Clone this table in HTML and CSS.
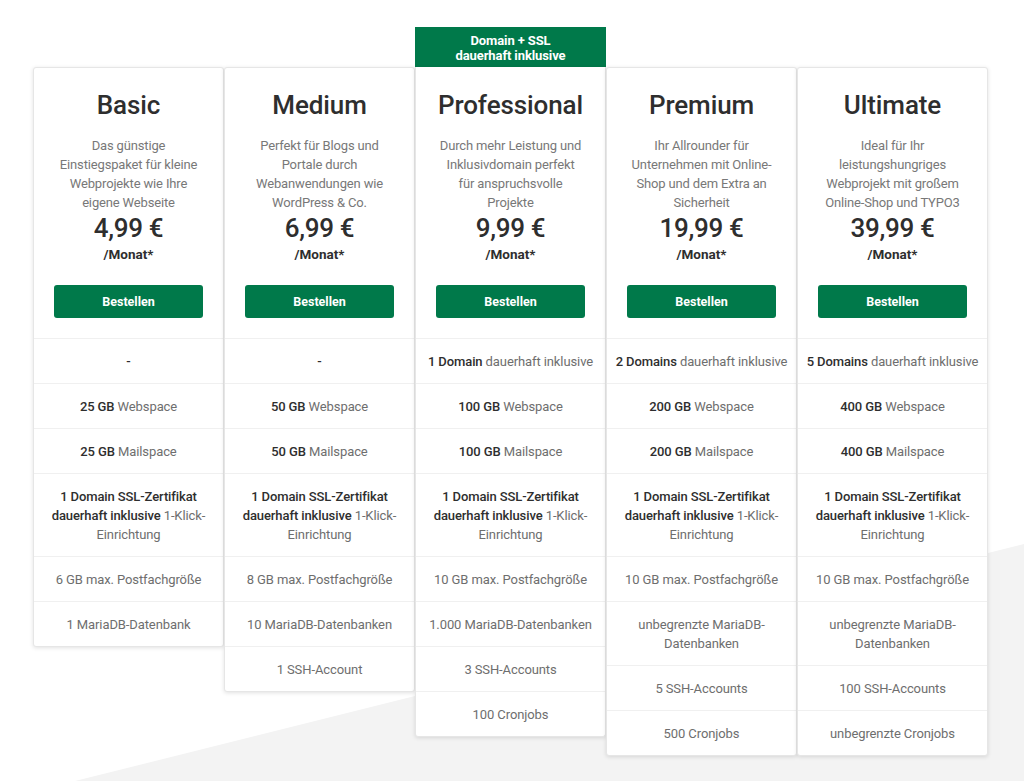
FILE: index.html
```html
<!DOCTYPE html>
<html lang="de">
<head>
<meta charset="utf-8">
<title>Hosting Tarife</title>
<link rel="stylesheet" href="styles.css">
</head>
<body>
<div class="page">
  <div class="bg-shape"></div>
  <div class="plans">
    <div class="plan">
      <div class="card">
        <div class="head">
          <h2 class="title">Basic</h2>
          <p class="desc">Das günstige<br>Einstiegspaket für kleine<br>Webprojekte wie Ihre<br>eigene Webseite</p>
          <div class="price">4,99 €</div>
          <div class="period">/Monat*</div>
          <a class="btn" href="#">Bestellen</a>
        </div>
        <ul class="features">
          <li><b>-</b></li>
          <li><b>25 GB</b> Webspace</li>
          <li><b>25 GB</b> Mailspace</li>
          <li><b>1 Domain SSL-Zertifikat<br>dauerhaft inklusive</b> 1-Klick-<br>Einrichtung</li>
          <li>6 GB max. Postfachgröße</li>
          <li>1 MariaDB-Datenbank</li>
        </ul>
      </div>
    </div>
    <div class="plan">
      <div class="card">
        <div class="head">
          <h2 class="title">Medium</h2>
          <p class="desc">Perfekt für Blogs und<br>Portale durch<br>Webanwendungen wie<br>WordPress &amp; Co.</p>
          <div class="price">6,99 €</div>
          <div class="period">/Monat*</div>
          <a class="btn" href="#">Bestellen</a>
        </div>
        <ul class="features">
          <li><b>-</b></li>
          <li><b>50 GB</b> Webspace</li>
          <li><b>50 GB</b> Mailspace</li>
          <li><b>1 Domain SSL-Zertifikat<br>dauerhaft inklusive</b> 1-Klick-<br>Einrichtung</li>
          <li>8 GB max. Postfachgröße</li>
          <li>10 MariaDB-Datenbanken</li>
          <li>1 SSH-Account</li>
        </ul>
      </div>
    </div>
    <div class="plan featured">
      <div class="badge">Domain + SSL<br>dauerhaft inklusive</div>
      <div class="card">
        <div class="head">
          <h2 class="title">Professional</h2>
          <p class="desc">Durch mehr Leistung und<br>Inklusivdomain perfekt<br>für anspruchsvolle<br>Projekte</p>
          <div class="price">9,99 €</div>
          <div class="period">/Monat*</div>
          <a class="btn" href="#">Bestellen</a>
        </div>
        <ul class="features">
          <li><b>1 Domain</b> dauerhaft inklusive</li>
          <li><b>100 GB</b> Webspace</li>
          <li><b>100 GB</b> Mailspace</li>
          <li><b>1 Domain SSL-Zertifikat<br>dauerhaft inklusive</b> 1-Klick-<br>Einrichtung</li>
          <li>10 GB max. Postfachgröße</li>
          <li>1.000 MariaDB-Datenbanken</li>
          <li>3 SSH-Accounts</li>
          <li>100 Cronjobs</li>
        </ul>
      </div>
    </div>
    <div class="plan">
      <div class="card">
        <div class="head">
          <h2 class="title">Premium</h2>
          <p class="desc">Ihr Allrounder für<br>Unternehmen mit Online-<br>Shop und dem Extra an<br>Sicherheit</p>
          <div class="price">19,99 €</div>
          <div class="period">/Monat*</div>
          <a class="btn" href="#">Bestellen</a>
        </div>
        <ul class="features">
          <li><b>2 Domains</b> dauerhaft inklusive</li>
          <li><b>200 GB</b> Webspace</li>
          <li><b>200 GB</b> Mailspace</li>
          <li><b>1 Domain SSL-Zertifikat<br>dauerhaft inklusive</b> 1-Klick-<br>Einrichtung</li>
          <li>10 GB max. Postfachgröße</li>
          <li>unbegrenzte MariaDB-<br>Datenbanken</li>
          <li>5 SSH-Accounts</li>
          <li>500 Cronjobs</li>
        </ul>
      </div>
    </div>
    <div class="plan">
      <div class="card">
        <div class="head">
          <h2 class="title">Ultimate</h2>
          <p class="desc">Ideal für Ihr<br>leistungshungriges<br>Webprojekt mit großem<br>Online-Shop und TYPO3</p>
          <div class="price">39,99 €</div>
          <div class="period">/Monat*</div>
          <a class="btn" href="#">Bestellen</a>
        </div>
        <ul class="features">
          <li><b>5 Domains</b> dauerhaft inklusive</li>
          <li><b>400 GB</b> Webspace</li>
          <li><b>400 GB</b> Mailspace</li>
          <li><b>1 Domain SSL-Zertifikat<br>dauerhaft inklusive</b> 1-Klick-<br>Einrichtung</li>
          <li>10 GB max. Postfachgröße</li>
          <li>unbegrenzte MariaDB-<br>Datenbanken</li>
          <li>100 SSH-Accounts</li>
          <li>unbegrenzte Cronjobs</li>
        </ul>
      </div>
    </div>
  </div>
</div>
</body>
</html>
```

FILE: styles.css
```css
* { box-sizing: border-box; }

html, body {
  margin: 0;
  padding: 0;
  background: #fff;
}

body {
  font-family: Roboto, "Liberation Sans", Arial, sans-serif;
  color: #333;
}

.page {
  position: relative;
  width: 1024px;
  height: 781px;
  overflow: hidden;
}

.bg-shape {
  position: absolute;
  inset: 0;
  background: #f3f3f3;
  clip-path: polygon(75px 781px, 1024px 544px, 1024px 781px);
  z-index: 0;
}

.plans {
  position: relative;
  z-index: 1;
  display: flex;
  align-items: flex-start;
  padding: 27px 0 0 33px;
}

.plan {
  width: 191px;
  margin-top: 40px;
  display: flex;
  flex-direction: column;
}

.plan.featured {
  margin-top: 0;
}

.badge {
  height: 40px;
  background: #00794a;
  color: #fff;
  font-size: 13px;
  font-weight: 700;
  line-height: 15px;
  text-align: center;
  padding-top: 6px;
  letter-spacing: -0.1px;
}

.card {
  background: #fff;
  border: 1px solid #e6e6e6;
  border-radius: 3px;
  box-shadow: 0 1px 4px rgba(0, 0, 0, 0.12);
}

.featured .card {
  border-top: none;
  border-radius: 0 0 3px 3px;
}

.head {
  padding: 20px 10px 20px;
  text-align: center;
}

.featured .head {
  padding-top: 21px;
}

.title {
  margin: 0;
  font-size: 26px;
  font-weight: 500;
  line-height: 34px;
  color: #2e2e2e;
  letter-spacing: -0.1px;
}

.desc {
  margin: 14px 0 0;
  font-size: 13px;
  line-height: 19px;
  color: #787878;
  letter-spacing: -0.15px;
}

.price {
  font-size: 26px;
  font-weight: 500;
  line-height: 31px;
  color: #2e2e2e;
  margin-top: 0.5px;
  letter-spacing: -0.3px;
}

.period {
  font-size: 13.5px;
  font-weight: 700;
  line-height: 20px;
  color: #2e2e2e;
}

.btn {
  display: flex;
  align-items: center;
  justify-content: center;
  margin: 21px 10px 0;
  height: 33px;
  background: #00794a;
  border-radius: 3px;
  color: #fff;
  font-size: 12.5px;
  font-weight: 700;
  text-decoration: none;
}

.features {
  list-style: none;
  margin: 0;
  padding: 0;
}

.features li {
  border-top: 1px solid #f0f0f0;
  padding: 13px 2px 12px;
  font-size: 13px;
  line-height: 19px;
  color: #6e6e6e;
  text-align: center;
  letter-spacing: -0.1px;
}

.features b {
  font-weight: 500;
  color: #2e2e2e;
}
```
